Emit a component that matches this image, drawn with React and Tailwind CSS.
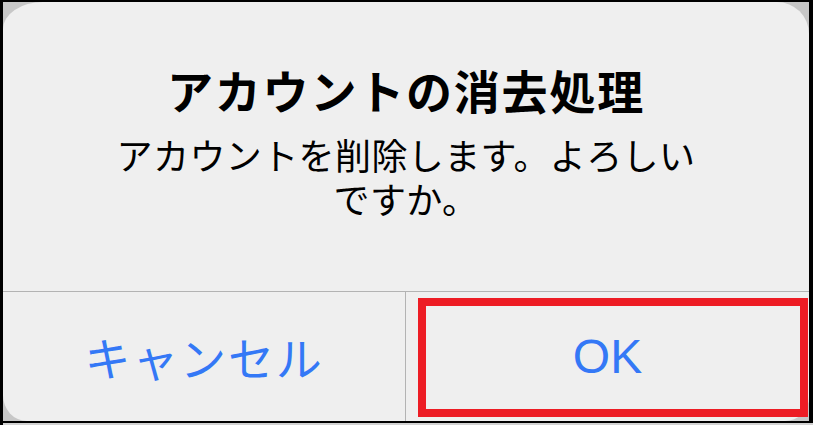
import React from 'react';

const jp = { fontFamily: '"Noto Sans CJK JP", "Noto Sans", sans-serif' };

export default function App() {
  return (
    <div className="w-[813px] h-[425px] bg-black flex flex-col">
      <div className="flex-1 pt-[2px] pl-[3px] pr-[4px] pb-[2px] flex">
        <div className="flex-1 bg-[#c7c7c7] flex">
          {/* alert card */}
          <div className="flex-1 bg-[#efefef] rounded-tl-[40px_27px] rounded-tr-[32px] rounded-bl-[24px_26px] rounded-br-[24px] flex flex-col">
            <div className="h-[289px] flex flex-col items-center pt-[59px] text-black" style={jp}>
              <h1 className="text-[46px] leading-[56px] font-bold tracking-[1.8px]">
                アカウントの消去処理
              </h1>
              <p className="mt-[15px] w-[600px] text-center text-[36px] leading-[44px] tracking-[0.4px]">
                アカウントを削除します。よろしい
                <br />
                ですか。
              </p>
            </div>

            {/* buttons */}
            <div className="flex-1 flex border-t border-[#b3b3b3]">
              <button
                className="w-[403px] flex items-center justify-center text-[#3478f6] text-[46px] tracking-[1.8px] border-r border-[#b3b3b3]"
                style={jp}
              >
                キャンセル
              </button>
              <button
                className="relative flex-1 flex items-center justify-center text-[#3478f6] text-[48px]"
                style={{ fontFamily: '"Liberation Sans", Arial, sans-serif' }}
              >
                OK
                <span className="absolute left-[12px] top-[6px] right-[1px] bottom-[4px] border-[8px] border-[#ed1c24]" />
              </button>
            </div>
          </div>
        </div>
      </div>
      <div className="h-[2px] ml-[3px] bg-[#d2d2d2]" />
    </div>
  );
}
